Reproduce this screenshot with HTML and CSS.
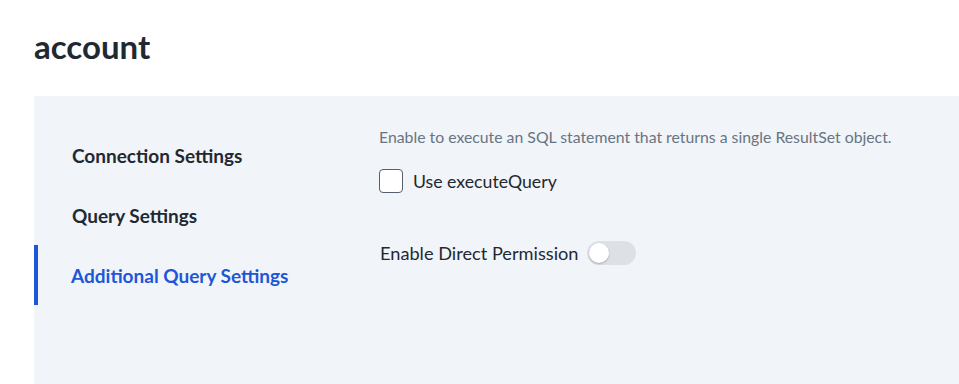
FILE: index.html
```html
<html lang="en"><head>
    <meta charset="UTF-8">
    <meta name="viewport" content="width=device-width, initial-scale=1.0">
    <title>account</title>
    <link rel="stylesheet" href="styles.css">
</head>
<body>
    <div class="page">
        <h1 class="title">account</h1>

        <div class="panel">
            <!-- Settings navigation -->
            <ul class="nav">
                <li class="nav-item">Connection Settings</li>
                <li class="nav-item">Query Settings</li>
                <li class="nav-item active">Additional Query Settings</li>
            </ul>

            <!-- Settings content -->
            <div class="content">
                <p class="hint">Enable to execute an SQL statement that returns a single ResultSet object.</p>
                <label class="check">
                    <span class="box"></span>
                    Use executeQuery
                </label>

                <div class="toggle-row">
                    <span>Enable Direct Permission</span>
                    <span class="toggle"><span class="knob"></span></span>
                </div>
            </div>
        </div>
    </div>
</body></html>
```

FILE: styles.css
```css
body {
    margin: 0;
    font-family: Lato, "Open Sans", sans-serif;
    background-color: #fff;
    color: #1f2a37;
}
.page {
    padding: 28px 0 0 34px;
}
.title {
    margin: 0 0 32px 0;
    font-size: 33px;
    font-weight: 700;
    line-height: 36px;
    color: #1f2933;
}
.panel {
    display: flex;
    height: 288px;
    background-color: #f1f4f8;
    padding-top: 29px;
    box-sizing: border-box;
}
.nav {
    list-style: none;
    margin: 0;
    padding: 0;
    width: 345px;
}
.nav-item {
    height: 60px;
    display: flex;
    align-items: center;
    padding-left: 34px;
    font-size: 19px;
    font-weight: 700;
    color: #1f2933;
    box-sizing: border-box;
    border-left: 4px solid transparent;
}
.nav-item.active {
    border-left-color: #1d57d8;
    color: #1d57d8;
    padding-left: 33px;
}
.content {
    padding-top: 2px;
}
.hint {
    margin: 0 0 22px 0;
    font-size: 15.8px;
    line-height: 20px;
    color: #677584;
}
.check {
    display: flex;
    align-items: center;
    gap: 10px;
    height: 24px;
    font-size: 17.7px;
    color: #1f2933;
}
.box {
    width: 24px;
    height: 24px;
    border: 1.5px solid #56606c;
    border-radius: 4px;
    background: #fff;
    box-sizing: border-box;
}
.toggle-row {
    display: flex;
    align-items: center;
    gap: 9px;
    height: 24px;
    margin: 48px 0 0 1px;
    font-size: 18.2px;
    color: #1f2933;
}
.toggle {
    width: 49px;
    height: 24px;
    border-radius: 12px;
    background: #dde1e6;
    display: flex;
    align-items: center;
    padding: 0 2px;
    box-sizing: border-box;
}
.knob {
    width: 20px;
    height: 20px;
    border-radius: 50%;
    background: #fff;
    box-shadow: 0 1px 2px rgba(0, 0, 0, 0.25);
}
```
